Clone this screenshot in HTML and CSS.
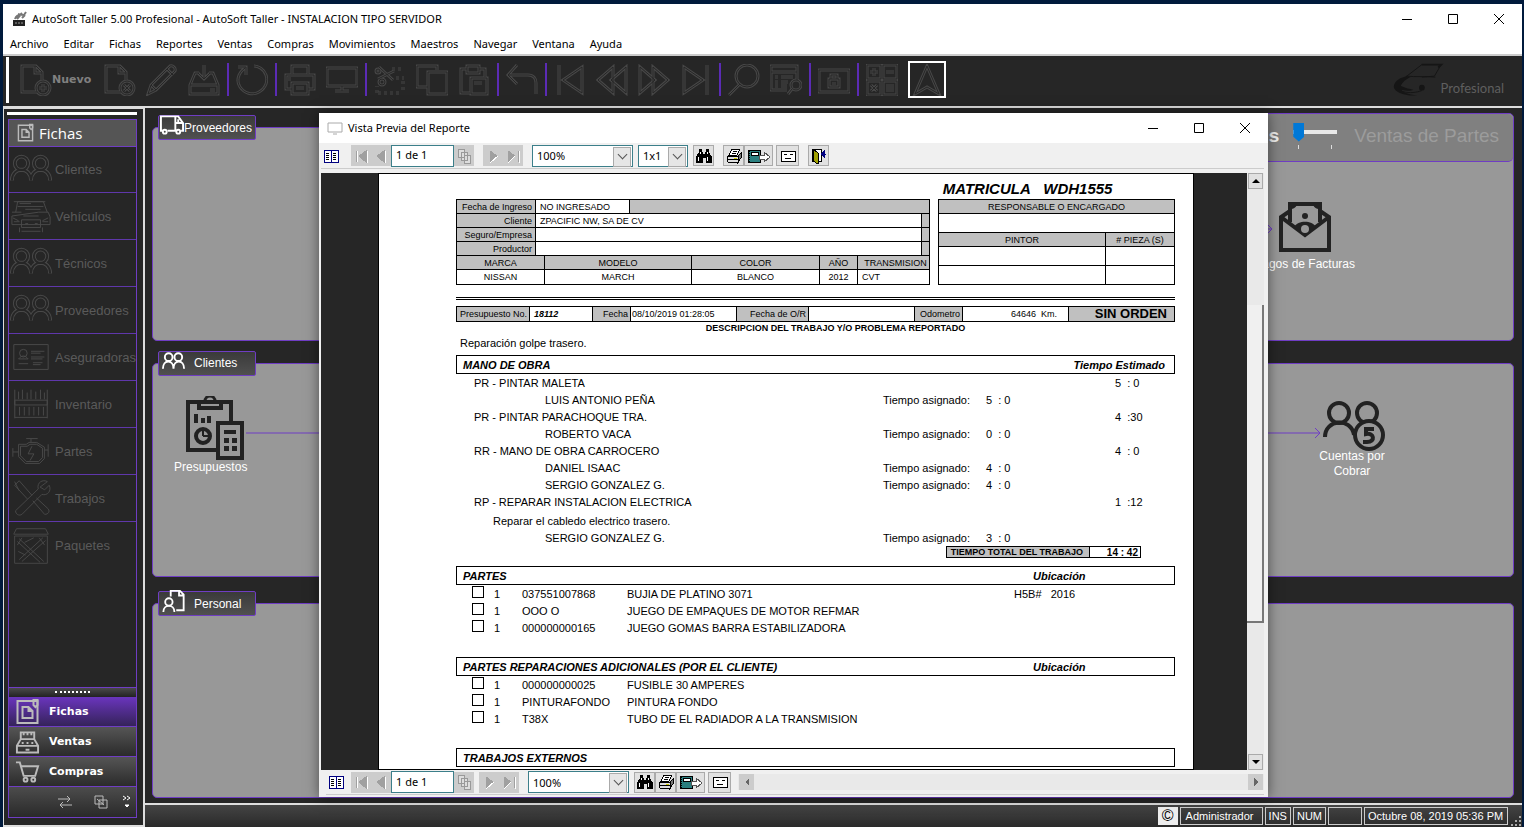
FILE: index.html
```
<!DOCTYPE html>
<html lang="es">
<head>
    <meta charset="UTF-8">
    <meta name="viewport" content="width=device-width, initial-scale=1.0">
    <title>AutoSoft Taller</title>
    <link rel="stylesheet" href="styles.css">
</head>
<body>
    <!-- Icon shapes -->
    <svg class="sprite" aria-hidden="true">
        <symbol id="i-doc" viewBox="0 0 32 32"><path d="M17 28H2V2h14l6 6v8M15 2v7h7"/><circle cx="23" cy="24" r="7"/></symbol>
        <symbol id="i-plus" viewBox="0 0 32 32"><path d="M23 20v8M19 24h8"/></symbol>
        <symbol id="i-x" viewBox="0 0 32 32"><path d="M20 21l6 6M26 21l-6 6"/></symbol>
        <symbol id="i-pencil" viewBox="0 0 32 32"><path d="M2 30l3-9L24 2c3-1 6 2 5 5L10 26zM5 21l5 5M21 5l6 6"/></symbol>
        <symbol id="i-save" viewBox="0 0 32 32"><path d="M11 9H7L2 21v9h28v-9L25 9h-4M2 21h28M16 1v14M10 9l6 6 6-6M22 26h5"/></symbol>
        <symbol id="i-refresh" viewBox="0 0 32 32"><path d="M2 3h8v8M9 4C2 9 0 17 4 23s12 9 19 5 9-11 7-17S22 2 18 2"/></symbol>
        <symbol id="i-print" viewBox="0 0 32 32"><path d="M8 10V2h16v8M8 25H2V11h28v14h-6M8 19h16v11H8zM12 24h8M4 15h3"/></symbol>
        <symbol id="i-monitor" viewBox="0 0 32 32"><path d="M1 4h30v18H1zM16 22v5M9 27h14"/></symbol>
        <symbol id="i-cut" viewBox="0 0 32 32"><path d="M5 3l14 13M4 15l16-8"/><circle cx="4" cy="7" r="2"/><circle cx="8" cy="18" r="3"/><path d="M18 5h12M22 14h8M29 17v12M25 29H3M3 29v-7" stroke-dasharray="3 3"/></symbol>
        <symbol id="i-copy" viewBox="0 0 32 32"><path d="M12 23H1V2h20v4M12 8h19v22H12z"/></symbol>
        <symbol id="i-paste" viewBox="0 0 32 32"><path d="M12 29H3V5h6M21 5h6v8M9 2h12v7H9zM13 14h16v16H13zM16 19h8"/></symbol>
        <symbol id="i-undo" viewBox="0 0 32 32"><path d="M11 1L2 11l9 9M2 11h20c6 0 8 4 8 8v11"/></symbol>
        <symbol id="i-first" viewBox="0 0 32 32"><path d="M5 1v30M28 3v26L9 16z"/></symbol>
        <symbol id="i-rew" viewBox="0 0 32 32"><path d="M17 3v26L2 16zM30 3v26L15 16z"/></symbol>
        <symbol id="i-fwd" viewBox="0 0 32 32"><path d="M15 3v26l15-13zM2 3v26l15-13z"/></symbol>
        <symbol id="i-last" viewBox="0 0 32 32"><path d="M27 1v30M4 3v26l19-13z"/></symbol>
        <symbol id="i-search" viewBox="0 0 32 32"><circle cx="19" cy="12" r="11"/><path d="M12 20L1 31"/></symbol>
        <symbol id="i-list" viewBox="0 0 32 32"><path d="M17 26H1V2h26v14M1 8h26M5 13h3M11 13h12M5 18h3M11 18h7M5 22h3M11 22h6"/><circle cx="26" cy="21" r="5"/><path d="M22 25l-4 5"/></symbol>
        <symbol id="i-lock" viewBox="0 0 32 32"><path d="M1 6h30v22H1zM11 15h10v8H11zM13 15v-4h6v4M16 18v3"/></symbol>
        <symbol id="i-calc" viewBox="0 0 32 32"><path d="M1 1h14v14H1zM17 1h14v14H17zM1 17h14v14H1zM17 17h14v14H17zM4 8h8M8 4v8M20 8h8M5 21l6 6M11 21l-6 6M20 22h8M20 26h8"/></symbol>
        <symbol id="i-nav" viewBox="0 0 32 32"><path d="M16 2l12 28-12-7-12 7z"/></symbol>
        <symbol id="i-people" viewBox="0 0 44 32"><circle cx="12" cy="9" r="7"/><circle cx="32" cy="9" r="7"/><path d="M2 27c0-15 20-15 20 0M22 27c0-15 20-15 20 0"/></symbol>
        <symbol id="i-car" viewBox="0 0 44 36"><path d="M6 14l2-11h27l4 11M4 3h33M8 8h27M2 14h10M30 14h10l2 5v8H2v-9zM12 22h20v8H12zM10 30v5M34 30v5M16 26h3M26 26h3M12 34h20M14 18h16M3 20l6 3M40 20l-6 3M10 5h12M16 11h16M4 24h6M34 24h6"/></symbol>
        <symbol id="i-card" viewBox="0 0 44 32"><path d="M4 3h36v26H4zM22 10h14M22 12h10M22 16h14M22 18h12M24 22h10M24 24h8M9 23h10M9 18c3-4 7-4 10 0z"/><circle cx="14" cy="12" r="4"/></symbol>
        <symbol id="i-shelf" viewBox="0 0 44 36"><path d="M5 3v30M39 3v30M5 14h34v5H5zM5 32h34M9 5v8M13 3v10M18 6v7M22 3v10M27 5v8M32 3v10M36 6v7M10 21v9M15 21v9M20 21v9M25 21v9M30 21v9M35 21v9"/></symbol>
        <symbol id="i-engine" viewBox="0 0 44 36"><path d="M9 11h8l3-2h8l8 5v12l-5 5H16l-7-7zM11 13h7l3-2h7l6 4v10l-4 4H17l-6-6zM17 5h12M22 5v4M3 15v9M3 19h6M40 11v13M36 17h4M23 13l-4 8h6l-4 7"/></symbol>
        <symbol id="i-tools" viewBox="0 0 44 44"><path d="M4 8l5-5 14 16M40 4c-5-3-12 1-10 8L5 36c0 4 4 6 7 4l22-22c6 2 11-4 8-10l-5 5-5-3zM24 25l13 15c4 0 6-3 4-6L28 22M4 8l14 15M4 4l5 10"/></symbol>
        <symbol id="i-box" viewBox="0 0 44 44"><path d="M6 3h32l3 6H3zM4 11h36v30H4zM9 37l26-24M12 39l26-23M9 14l27 25M7 17l25 23M12 13l-5 8M31 13l6 8M15 18l10-5M8 28l8 4"/></symbol>
        <symbol id="i-file" viewBox="0 0 24 26"><path d="M2 2h20v22H2z"/><path d="M7 8h6l4 4v7H7zM13 8v4h4"/><path d="M18 1v5l2 2 2-2V1z"/></symbol>
        <symbol id="i-register" viewBox="0 0 26 24"><path d="M6 10V2h14v8M9 1v4M13 1v4M17 1v4M6 9L2 16v7h22v-7l-4-7zM2 16h22M7 13h2M12 13h2M17 13h2M11 20h4"/></symbol>
        <symbol id="i-cart" viewBox="0 0 26 24"><path d="M1 2h4l4 14h12l3-10H6"/><circle cx="11" cy="20" r="2"/><circle cx="19" cy="20" r="2"/></symbol>

        <!-- Report toolbar -->
        <symbol id="r-toc" viewBox="0 0 16 16"><path d="M1 2h14v12H1z" fill="#fff" stroke="#000080"/><path d="M8 2v12" stroke="#000080"/><path d="M3 5h3M3 7h3M3 9h3M3 11h3M10 5h3M10 7h3M10 9h3M10 11h3" stroke="#000"/></symbol>
        <symbol id="r-first" viewBox="0 0 16 16"><path d="M3 3v11M13 3v11L6 8z" fill="#a0a0a0" stroke="#a0a0a0"/><path d="M4 3v11M14 3v12" stroke="#fff"/></symbol>
        <symbol id="r-prev" viewBox="0 0 16 16"><path d="M11 3v11L4 8z" fill="#a0a0a0" stroke="#a0a0a0"/><path d="M12 3v12" stroke="#fff"/></symbol>
        <symbol id="r-copy" viewBox="0 0 16 16"><path d="M2 1h6v8H2zM5 4h6v8H5zM8 7h6v8H8z" fill="#ddd" stroke="#999"/></symbol>
        <symbol id="r-next" viewBox="0 0 16 16"><path d="M5 3v11l7-6z" fill="#a0a0a0" stroke="#a0a0a0"/><path d="M5 15l8-7" stroke="#fff"/></symbol>
        <symbol id="r-last" viewBox="0 0 16 16"><path d="M3 3v11l7-6zM13 3v11" fill="#a0a0a0" stroke="#a0a0a0"/><path d="M3 15l7-7M14 3v12" stroke="#fff"/></symbol>
        <symbol id="r-find" viewBox="0 0 16 16"><path d="M3 1h3v3h1v2h2V4h1V1h3v3l3 5v6h-6v-5H7v5H0V9l3-5z" fill="#000"/><path d="M2 9v4M11 9v4M4 4v2M11 4v2" stroke="#fff"/></symbol>
        <symbol id="r-print" viewBox="0 0 16 16"><path d="M6 1h8l-3 6H3z" fill="#fff" stroke="#000"/><path d="M7 3h4M6 5h4" stroke="#000"/><path d="M1 8h11v6H2l-1-2z" fill="#ddd" stroke="#000"/><path d="M12 8l3-3v5l-3 4z" fill="#777" stroke="#000"/><path d="M2 11h10" stroke="#000"/><path d="M8 10h3" stroke="#cc0"/></symbol>
        <symbol id="r-export" viewBox="0 0 24 16"><path d="M1 2h12v12H1z" fill="#2a8080" stroke="#000"/><path d="M4 4h7v3H4z" fill="#fff" stroke="#000"/><path d="M2 3v11" stroke="#000" stroke-dasharray="1 1"/><path d="M12 7h5V4l6 5-6 5v-3h-5z" fill="#fff" stroke="#555"/></symbol>
        <symbol id="r-mail" viewBox="0 0 16 16"><path d="M1 3h14v10H1z" fill="#fff" stroke="#000"/><path d="M4 6h3M10 6h3M5 10h6" stroke="#000"/></symbol>
        <symbol id="r-exit" viewBox="0 0 16 16"><path d="M1 1h9v12H1z" fill="#fff" stroke="#000"/><path d="M2 1l5 4v11l-5-3z" fill="#a0a000" stroke="#000"/><path d="M10 6h5M10 6l3-3v6z" fill="#000080" stroke="#000080"/></symbol>
    </svg>

    <div class="app">
        <header class="titlebar">
            <svg class="app-logo" viewBox="0 0 16 18"><path d="M2 10h12v6H2z" fill="#222"/><path d="M4 9c1-3 4-5 9-4l2-3M6 9l5-6M11 8l3-3M7 4l3 1" stroke="#777" stroke-width="2" fill="none"/><path d="M4 13h8" stroke="#999" stroke-dasharray="2 1"/></svg>
            <h1>AutoSoft Taller 5.00 Profesional - AutoSoft Taller - INSTALACION TIPO SERVIDOR</h1>
            <div class="win-buttons">
                <button aria-label="Minimizar"><svg viewBox="0 0 12 12"><path d="M1 6.5h10"/></svg></button>
                <button aria-label="Maximizar"><svg viewBox="0 0 12 12"><path d="M1.5 1.5h9v9h-9z"/></svg></button>
                <button aria-label="Cerrar"><svg viewBox="0 0 12 12"><path d="M1 1l10 10M11 1L1 11"/></svg></button>
            </div>
        </header>

        <nav class="menu">
            <a href="#">Archivo</a>
            <a href="#">Editar</a>
            <a href="#">Fichas</a>
            <a href="#">Reportes</a>
            <a href="#">Ventas</a>
            <a href="#">Compras</a>
            <a href="#">Movimientos</a>
            <a href="#">Maestros</a>
            <a href="#">Navegar</a>
            <a href="#">Ventana</a>
            <a href="#">Ayuda</a>
        </nav>

        <!-- Main toolbar -->
        <div class="toolbar">
            <span class="grip"></span>
            <button class="tool new"><svg><use href="#i-doc"/><use href="#i-plus"/><use class="in" href="#i-doc"/><use class="in" href="#i-plus"/></svg>Nuevo</button>
            <button class="tool" aria-label="Eliminar"><svg><use href="#i-doc"/><use href="#i-x"/><use class="in" href="#i-doc"/><use class="in" href="#i-x"/></svg></button>
            <button class="tool" aria-label="Editar"><svg><use href="#i-pencil"/><use class="in" href="#i-pencil"/></svg></button>
            <button class="tool" aria-label="Guardar"><svg><use href="#i-save"/><use class="in" href="#i-save"/></svg></button>
            <i class="sep"></i>
            <button class="tool" aria-label="Actualizar"><svg><use href="#i-refresh"/><use class="in" href="#i-refresh"/></svg></button>
            <i class="sep"></i>
            <button class="tool" aria-label="Imprimir"><svg><use href="#i-print"/><use class="in" href="#i-print"/></svg></button>
            <button class="tool" aria-label="Pantalla"><svg><use href="#i-monitor"/><use class="in" href="#i-monitor"/></svg></button>
            <i class="sep"></i>
            <button class="tool" aria-label="Cortar"><svg><use href="#i-cut"/><use class="in" href="#i-cut"/></svg></button>
            <button class="tool" aria-label="Copiar"><svg><use href="#i-copy"/><use class="in" href="#i-copy"/></svg></button>
            <button class="tool" aria-label="Pegar"><svg><use href="#i-paste"/><use class="in" href="#i-paste"/></svg></button>
            <i class="sep"></i>
            <button class="tool" aria-label="Deshacer"><svg><use href="#i-undo"/><use class="in" href="#i-undo"/></svg></button>
            <i class="sep"></i>
            <button class="tool" aria-label="Primero"><svg><use href="#i-first"/><use class="in" href="#i-first"/></svg></button>
            <button class="tool" aria-label="Anterior"><svg><use href="#i-rew"/><use class="in" href="#i-rew"/></svg></button>
            <button class="tool" aria-label="Siguiente"><svg><use href="#i-fwd"/><use class="in" href="#i-fwd"/></svg></button>
            <button class="tool" aria-label="Ultimo"><svg><use href="#i-last"/><use class="in" href="#i-last"/></svg></button>
            <i class="sep"></i>
            <button class="tool" aria-label="Buscar"><svg><use href="#i-search"/><use class="in" href="#i-search"/></svg></button>
            <button class="tool" aria-label="Consultar"><svg><use href="#i-list"/><use class="in" href="#i-list"/></svg></button>
            <i class="sep"></i>
            <button class="tool" aria-label="Bloquear"><svg><use href="#i-lock"/><use class="in" href="#i-lock"/></svg></button>
            <i class="sep"></i>
            <button class="tool" aria-label="Calculadora"><svg><use href="#i-calc"/><use class="in" href="#i-calc"/></svg></button>
            <button class="tool active" aria-label="Navegador"><svg><use href="#i-nav"/><use class="in" href="#i-nav"/></svg></button>
            <div class="brand">
                <svg viewBox="0 0 54 36"><path d="M13 15L30 2h20l-7 12-13 1" fill="none" stroke="#151515" stroke-width="1"/><path d="M30 2h20l-3 3" fill="none" stroke="#151515" stroke-width="2"/><path d="M14 14C4 16 0 22 1 26s10 9 24 8c-9-1-16-4-16-6 7 2 10 1 12 0-6-1-9-2-13-4 2-4 6-7 10-9" fill="#151515"/><path d="M14 14c10 1 20 0 30 1M10 30c8 2 14 1 20-1" fill="none" stroke="#151515"/><circle cx="30" cy="26" r="3" fill="#151515"/></svg>
                <span>Profesional</span>
            </div>
        </div>

        <div class="body">
            <aside class="sidebar">
                <div class="bar-grip"></div>
                <div class="side-box">
                    <h2 class="side-head"><svg><use href="#i-file"/></svg>Fichas</h2>
                    <nav class="side-list">
                        <a href="#"><svg><use href="#i-people"/><use class="in" href="#i-people"/></svg>Clientes</a>
                        <a href="#"><svg><use href="#i-car"/></svg>Vehículos</a>
                        <a href="#"><svg><use href="#i-people"/><use class="in" href="#i-people"/></svg>Técnicos</a>
                        <a href="#"><svg><use href="#i-people"/><use class="in" href="#i-people"/></svg>Proveedores</a>
                        <a href="#"><svg><use href="#i-card"/></svg>Aseguradoras</a>
                        <a href="#"><svg><use href="#i-shelf"/></svg>Inventario</a>
                        <a href="#"><svg><use href="#i-engine"/></svg>Partes</a>
                        <a href="#"><svg><use href="#i-tools"/></svg>Trabajos</a>
                        <a href="#"><svg><use href="#i-box"/></svg>Paquetes</a>
                    </nav>
                    <div class="splitter"><i></i></div>
                    <button class="group selected"><svg><use href="#i-file"/></svg>Fichas</button>
                    <button class="group"><svg><use href="#i-register"/></svg>Ventas</button>
                    <button class="group"><svg><use href="#i-cart"/></svg>Compras</button>
                    <div class="side-foot">
                        <button aria-label="Cambiar"><svg viewBox="0 0 14 14"><path d="M0 4h12M9 1l3 3-3 3M14 10H2M5 7l-3 3 3 3"/></svg></button>
                        <button aria-label="Ventanas"><svg viewBox="0 0 14 14"><path d="M1 1h8v8H1zM5 5h8v8H5zM3 4l7 6"/></svg></button>
                        <button class="more" aria-label="Mas"><svg viewBox="0 0 10 14"><path d="M1 1l3 2-3 2M5 1l3 2-3 2"/><path d="M3 10h4l-2 2z" fill="#fff"/></svg></button>
                    </div>
                </div>
            </aside>

            <div class="work">
                <main class="desk">
                    <section class="row first-row">
                        <div class="panel short">
                            <h3 class="tag wide-icon"><svg viewBox="0 0 26 20"><path d="M4 16H2V1h15v15H9M17 1h3l5 7v8h-2M17 8h8M20 8V4"/><circle cx="6" cy="17" r="2"/><circle cx="20" cy="17" r="2"/></svg>Proveedores</h3>
                        </div>
                        <div class="panel">
                            <div class="panel-head">
                                <label for="modo">s</label>
                                <div class="slider">
                                    <input id="modo" type="range" min="0" max="1" value="0">
                                    <div class="ticks"><i></i><i></i></div>
                                </div>
                                <span>Ventas de Partes</span>
                            </div>
                            <div class="node node-pagos">
                                <svg viewBox="0 0 52 50"><path d="M2 15v33h48V15L41 9M11 9L2 15l24 18 24-18M11 20V2h30v18" fill="none" stroke="#222" stroke-width="4"/><path d="M11 1h7c0 4-3 6-7 6zM41 1h-7c0 4 3 6 7 6z" fill="#222"/><circle cx="26" cy="14" r="3" fill="#222"/><path d="M15 25c4-7 18-7 22 0L26 35z" fill="#222"/><circle cx="26" cy="27" r="4" fill="#989898"/></svg>
                                Pagos de Facturas
                            </div>
                            <svg class="arrow arrow-pagos" viewBox="0 0 76 10"><path d="M0 5h75M70 0l5 5-5 5"/></svg>
                        </div>
                    </section>
                    <section class="panel">
                        <h3 class="tag"><svg viewBox="0 0 26 18"><circle cx="8" cy="5" r="4"/><circle cx="18" cy="5" r="4"/><path d="M2 17c0-10 11-10 11 0M13 17c0-10 11-10 11 0"/></svg>Clientes</h3>
                        <div class="node node-presup">
                            <svg viewBox="0 0 58 64"><path d="M2 6h43v48H2z" fill="none" stroke="#222" stroke-width="4"/><path d="M13 4v8h22V4" fill="none" stroke="#222" stroke-width="4"/><path d="M19 5a5 5 0 0110 0" fill="none" stroke="#222" stroke-width="3"/><path d="M8 18h4v9H8zM15 22h4v5h-4zM21 20h4v7h-4z" fill="#222"/><circle cx="17" cy="40" r="7" fill="none" stroke="#222" stroke-width="4"/><path d="M17 40v-5M17 40h5" stroke="#222" stroke-width="2"/><path d="M32 27h24v35H32z" fill="#989898" stroke="#222" stroke-width="4"/><path d="M38 34h12v4H38zM38 42h5v5h-5zM46 42h5v5h-5zM38 50h5v5h-5zM46 50h5v5h-5z" fill="#222"/></svg>
                            Presupuestos
                        </div>
                        <svg class="arrow arrow-cobrar" viewBox="0 0 1076 10" preserveAspectRatio="xMaxYMid slice"><path d="M0 5h1075M1070 0l5 5-5 5"/></svg>
                        <div class="node node-cobrar">
                            <svg viewBox="0 0 64 52"><circle cx="17" cy="13" r="10" fill="none" stroke="#222" stroke-width="4"/><circle cx="45" cy="13" r="10" fill="none" stroke="#222" stroke-width="4"/><path d="M3 37c0-18 26-20 29-2" fill="none" stroke="#222" stroke-width="4"/><circle cx="47" cy="35" r="14" fill="#989898" stroke="#222" stroke-width="4"/><path d="M52 29h-8v5c8-2 10 8 1 8h-4" fill="none" stroke="#222" stroke-width="4"/></svg>
                            Cuentas por Cobrar
                        </div>
                    </section>
                    <section class="panel last-row">
                        <h3 class="tag"><svg viewBox="0 0 26 26"><path d="M10 8V2h10l4 4v17h-8M19 2v5h5"/><circle cx="8" cy="14" r="4"/><path d="M2 25c0-9 12-9 12 0"/></svg>Personal</h3>
                    </section>

                    <!-- Report preview window -->
                    <div class="preview">
                        <div class="titlebar preview-title">
                            <svg class="preview-logo" viewBox="0 0 16 14"><path d="M1 2h14v9H1zM6 13h4" fill="none" stroke="#aaa"/></svg>
                            <h2>Vista Previa del Reporte</h2>
                            <div class="win-buttons">
                                <button aria-label="Minimizar"><svg viewBox="0 0 12 12"><path d="M1 6.5h10"/></svg></button>
                                <button aria-label="Maximizar"><svg viewBox="0 0 12 12"><path d="M1.5 1.5h9v9h-9z"/></svg></button>
                                <button aria-label="Cerrar"><svg viewBox="0 0 12 12"><path d="M1 1l10 10M11 1L1 11"/></svg></button>
                            </div>
                        </div>
                        <div class="rbar">
                            <button class="plain" aria-label="Indice"><svg><use href="#r-toc"/></svg></button>
                            <button class="off" aria-label="Primera"><svg><use href="#r-first"/></svg></button>
                            <button class="off" aria-label="Anterior"><svg><use href="#r-prev"/></svg></button>
                            <input type="text" value="1 de 1" aria-label="Pagina">
                            <button class="off" aria-label="Copias"><svg><use href="#r-copy"/></svg></button>
                            <button class="off gap" aria-label="Siguiente"><svg><use href="#r-next"/></svg></button>
                            <button class="off" aria-label="Ultima"><svg><use href="#r-last"/></svg></button>
                            <span class="drop zoom gap"><select aria-label="Zoom"><option>100%</option></select></span>
                            <span class="drop pages"><select aria-label="Paginas"><option>1x1</option></select></span>
                            <button aria-label="Buscar"><svg><use href="#r-find"/></svg></button>
                            <button class="gap" aria-label="Imprimir"><svg><use href="#r-print"/></svg></button>
                            <button class="wide" aria-label="Exportar"><svg><use href="#r-export"/></svg></button>
                            <button class="mail" aria-label="Correo"><svg><use href="#r-mail"/></svg></button>
                            <button class="gap" aria-label="Salir"><svg><use href="#r-exit"/></svg></button>
                        </div>

                        <div class="viewer">
                            <div class="canvas">
                                <article class="page">
                                    <p class="plate">MATRICULA&nbsp;&nbsp; WDH1555</p>
                                    <div class="heads">
                                        <div class="head-left">
                                            <table class="grid client">
                                                <colgroup><col class="c-label"><col class="c-date"><col><col class="c-end"></colgroup>
                                                <tr><th>Fecha de Ingreso</th><td>NO INGRESADO</td><td class="g" colspan="2"></td></tr>
                                                <tr><th>Cliente</th><td colspan="2">ZPACIFIC NW, SA DE CV</td><td class="g"></td></tr>
                                                <tr><th>Seguro/Empresa</th><td colspan="2"></td><td class="g"></td></tr>
                                                <tr><th>Productor</th><td colspan="2"></td><td class="g"></td></tr>
                                            </table>
                                            <table class="grid vehicle">
                                                <colgroup><col class="c-marca"><col class="c-modelo"><col><col class="c-anio"><col class="c-trans"></colgroup>
                                                <tr><th>MARCA</th><th>MODELO</th><th>COLOR</th><th>AÑO</th><th>TRANSMISION</th></tr>
                                                <tr><td>NISSAN</td><td>MARCH</td><td>BLANCO</td><td>2012</td><td class="left">CVT</td></tr>
                                            </table>
                                        </div>
                                        <table class="grid staff">
                                            <colgroup><col><col class="c-pieza"></colgroup>
                                            <tr><th colspan="2">RESPONSABLE O ENCARGADO</th></tr>
                                            <tr class="tall"><td colspan="2"></td></tr>
                                            <tr><th>PINTOR</th><th># PIEZA (S)</th></tr>
                                            <tr class="tall"><td></td><td></td></tr>
                                            <tr class="tall"><td></td><td></td></tr>
                                        </table>
                                    </div>
                                    <div class="rule"></div>
                                    <table class="grid order">
                                        <colgroup><col class="o1"><col class="o2"><col class="o3"><col class="o4"><col class="o5"><col class="o4"><col class="o6"><col class="o4"><col></colgroup>
                                        <tr>
                                            <th>Presupuesto No.</th><td><b><i>18112</i></b></td>
                                            <th>Fecha</th><td class="tight">08/10/2019 01:28:05</td>
                                            <th>Fecha de O/R</th><td></td>
                                            <th>Odometro</th><td class="km">64646&nbsp; Km.</td>
                                            <th class="status">SIN ORDEN</th>
                                        </tr>
                                    </table>
                                    <p class="desc-title">DESCRIPCION DEL TRABAJO Y/O PROBLEMA REPORTADO</p>
                                    <p class="desc">Reparación golpe trasero.</p>

                                    <h4 class="section"><span>MANO DE OBRA</span><span class="est">Tiempo Estimado</span></h4>
                                    <table class="labor">
                                        <colgroup><col><col class="l-asig"><col class="l-val"><col class="l-est"></colgroup>
                                        <tr><td>PR - PINTAR MALETA</td><td></td><td></td><td>5 &nbsp;: 0</td></tr>
                                        <tr><td class="who">LUIS ANTONIO PEÑA</td><td>Tiempo asignado:</td><td>5 &nbsp;: 0</td><td></td></tr>
                                        <tr><td>PR - PINTAR PARACHOQUE TRA.</td><td></td><td></td><td>4 &nbsp;:30</td></tr>
                                        <tr><td class="who">ROBERTO VACA</td><td>Tiempo asignado:</td><td>0 &nbsp;: 0</td><td></td></tr>
                                        <tr><td>RR - MANO DE OBRA CARROCERO</td><td></td><td></td><td>4 &nbsp;: 0</td></tr>
                                        <tr><td class="who">DANIEL ISAAC</td><td>Tiempo asignado:</td><td>4 &nbsp;: 0</td><td></td></tr>
                                        <tr><td class="who">SERGIO GONZALEZ G.</td><td>Tiempo asignado:</td><td>4 &nbsp;: 0</td><td></td></tr>
                                        <tr><td>RP - REPARAR INSTALACION ELECTRICA</td><td></td><td></td><td>1 &nbsp;:12</td></tr>
                                        <tr class="note"><td>Reparar el cabledo electrico trasero.</td><td></td><td></td><td></td></tr>
                                        <tr><td class="who">SERGIO GONZALEZ G.</td><td>Tiempo asignado:</td><td>3 &nbsp;: 0</td><td></td></tr>
                                    </table>
                                    <div class="total"><b>TIEMPO TOTAL DEL TRABAJO</b><strong>14 : 42</strong></div>

                                    <h4 class="section"><span>PARTES</span><span class="ubic">Ubicación</span></h4>
                                    <table class="parts">
                                        <colgroup><col class="p-chk"><col class="p-qty"><col class="p-code"><col><col class="p-ubi"></colgroup>
                                        <tr><td><input type="checkbox" aria-label="037551007868"></td><td>1</td><td>037551007868</td><td>BUJIA DE PLATINO 3071</td><td>H5B# &nbsp; 2016</td></tr>
                                        <tr><td><input type="checkbox" aria-label="OOO O"></td><td>1</td><td>OOO O</td><td>JUEGO DE EMPAQUES DE MOTOR REFMAR</td><td></td></tr>
                                        <tr><td><input type="checkbox" aria-label="000000000165"></td><td>1</td><td>000000000165</td><td>JUEGO GOMAS BARRA ESTABILIZADORA</td><td></td></tr>
                                    </table>

                                    <h4 class="section"><span>PARTES REPARACIONES ADICIONALES (POR EL CLIENTE)</span><span class="ubic">Ubicación</span></h4>
                                    <table class="parts">
                                        <colgroup><col class="p-chk"><col class="p-qty"><col class="p-code"><col><col class="p-ubi"></colgroup>
                                        <tr><td><input type="checkbox" aria-label="000000000025"></td><td>1</td><td>000000000025</td><td>FUSIBLE 30 AMPERES</td><td></td></tr>
                                        <tr><td><input type="checkbox" aria-label="PINTURAFONDO"></td><td>1</td><td>PINTURAFONDO</td><td>PINTURA FONDO</td><td></td></tr>
                                        <tr><td><input type="checkbox" aria-label="T38X"></td><td>1</td><td>T38X</td><td>TUBO DE EL RADIADOR A LA TRANSMISION</td><td></td></tr>
                                    </table>

                                    <h4 class="section"><span>TRABAJOS EXTERNOS</span></h4>
                                </article>
                            </div>
                            <div class="vscroll">
                                <button aria-label="Subir"><svg viewBox="0 0 8 8"><path d="M0 6h8L4 2z"/></svg></button>
                                <div class="before"></div>
                                <div class="thumb"></div>
                                <div class="after"></div>
                                <button aria-label="Bajar"><svg viewBox="0 0 8 8"><path d="M0 2h8L4 6z"/></svg></button>
                            </div>
                        </div>

                        <div class="rbar bottom">
                            <button class="plain" aria-label="Indice"><svg><use href="#r-toc"/></svg></button>
                            <button class="off" aria-label="Primera"><svg><use href="#r-first"/></svg></button>
                            <button class="off" aria-label="Anterior"><svg><use href="#r-prev"/></svg></button>
                            <input type="text" value="1 de 1" aria-label="Pagina">
                            <button class="off" aria-label="Copias"><svg><use href="#r-copy"/></svg></button>
                            <button class="off small-gap" aria-label="Siguiente"><svg><use href="#r-next"/></svg></button>
                            <button class="off" aria-label="Ultima"><svg><use href="#r-last"/></svg></button>
                            <span class="drop zoom gap"><select aria-label="Zoom"><option>100%</option></select></span>
                            <button class="small-gap" aria-label="Buscar"><svg><use href="#r-find"/></svg></button>
                            <button aria-label="Imprimir"><svg><use href="#r-print"/></svg></button>
                            <button class="wide" aria-label="Exportar"><svg><use href="#r-export"/></svg></button>
                            <button class="mail" aria-label="Correo"><svg><use href="#r-mail"/></svg></button>
                            <div class="hscroll">
                                <button aria-label="Izquierda"><svg viewBox="0 0 8 8"><path d="M6 0v8L2 4z"/></svg></button>
                                <button aria-label="Derecha"><svg viewBox="0 0 8 8"><path d="M2 0v8l4-4z"/></svg></button>
                            </div>
                        </div>
                    </div>
                </main>

                <footer class="statusbar">
                    <span class="copy">©</span>
                    <span class="cell user">Administrador</span>
                    <span class="cell">INS</span>
                    <span class="cell">NUM</span>
                    <span class="cell empty"></span>
                    <span class="cell date">Octubre 08, 2019 05:36 PM</span>
                    <svg class="resize" viewBox="0 0 12 12"><path d="M9 1h2v2H9zM5 5h2v2H5zM9 5h2v2H9zM1 9h2v2H1zM5 9h2v2H5zM9 9h2v2H9z" fill="#aaa"/></svg>
                </footer>
            </div>
        </div>
    </div>
</body>
</html>
```

FILE: styles.css
```
* {
    margin: 0;
    padding: 0;
    box-sizing: border-box;
}

body {
    height: 100vh;
    overflow: hidden;
    padding: 4px 2px 0 3px;
    background-color: #001a3c;
    font-family: "Liberation Sans", Arial, sans-serif;
    font-size: 12px;
}

button {
    font: inherit;
    border: none;
    background: none;
    cursor: pointer;
}

a {
    text-decoration: none;
    color: inherit;
}

svg {
    display: block;
    flex: none;
}

.sprite {
    position: absolute;
    width: 0;
    height: 0;
}

.app {
    height: 100%;
    display: flex;
    flex-direction: column;
    background-color: #262626;
}

/* Title bar and menu */
.titlebar {
    display: flex;
    align-items: center;
    height: 30px;
    padding-left: 8px;
    background-color: #fff;
}

.titlebar h1,
.titlebar h2 {
    flex: 1;
    padding-bottom: 2px;
    font-family: "Noto Sans", "Open Sans", sans-serif;
    font-size: 11px;
    font-weight: normal;
}

.app-logo {
    width: 16px;
    height: 18px;
    margin-right: 5px;
}

.win-buttons {
    display: flex;
}

.win-buttons button {
    width: 46px;
    height: 28px;
    display: flex;
    align-items: center;
    justify-content: center;
}

.win-buttons svg {
    width: 12px;
    height: 12px;
    fill: none;
    stroke: #000;
}

.menu {
    display: flex;
    gap: 15px;
    height: 20px;
    padding-left: 7px;
    background-color: #fff;
    font-family: "Noto Sans", "Open Sans", sans-serif;
    font-size: 11px;
    line-height: 20px;
}

/* Main toolbar */
.toolbar {
    display: flex;
    align-items: center;
    height: 54px;
    padding: 0 18px 3px 3px;
    border-top: 2px solid #ccc;
    border-bottom: 2px solid #ddd;
}

.grip {
    width: 3px;
    height: 46px;
    margin-right: 11px;
    background-color: #fff;
}

.tool {
    display: flex;
    align-items: center;
    justify-content: center;
    width: 42px;
    height: 37px;
    color: #808080;
    font-family: "DejaVu Sans", Verdana, sans-serif;
    font-size: 11px;
    font-weight: bold;
}

.tool.new {
    justify-content: flex-start;
    width: 79px;
}

.tool svg {
    width: 32px;
    height: 32px;
    fill: none;
    stroke: #474747;
    stroke-width: 3;
}

.tool svg .in {
    stroke: #262626;
    stroke-width: 1;
}

.tool.active {
    width: 38px;
    margin-left: 5px;
    border: 2px solid #fff;
}

.sep {
    width: 2px;
    height: 33px;
    margin: 0 2px;
    background-color: #5b2bb5;
}

.brand {
    display: flex;
    align-items: center;
    margin-left: auto;
    color: #5f5f5f;
    font-family: Lato, sans-serif;
    font-size: 13px;
}

.brand svg {
    width: 52px;
    height: 36px;
    margin-right: -4px;
}

.brand span {
    padding-top: 17px;
}

/* Sidebar */
.body {
    flex: 1;
    display: flex;
    min-height: 0;
}

.sidebar {
    display: flex;
    flex-direction: column;
    width: 142px;
    padding: 3px 6px 7px 3px;
    border: 1px solid #ddd;
    border-right: 2px solid #ddd;
    border-bottom: 2px solid #ddd;
}

.bar-grip {
    height: 3px;
    margin-bottom: 4px;
    background-color: #fff;
}

.side-box {
    flex: 1;
    display: flex;
    flex-direction: column;
    margin-left: 1px;
    border: 1px solid #6f3dc4;
}

.side-head {
    display: flex;
    align-items: center;
    gap: 5px;
    height: 27px;
    padding: 0 0 1px 8px;
    border-bottom: 1px solid #6f3dc4;
    background-color: #555;
    color: #fff;
    font-family: "Open Sans", sans-serif;
    font-size: 15px;
    font-weight: normal;
}

.side-head svg {
    width: 17px;
    height: 20px;
}

.side-head svg,
.group svg,
.side-foot svg {
    fill: none;
    stroke: #bbb;
    stroke-width: 2;
}

.side-list {
    flex: 1;
    border-bottom: 1px solid #6f3dc4;
}

.side-list a {
    display: flex;
    align-items: center;
    gap: 3px;
    height: 47px;
    padding-left: 1px;
    border-bottom: 1px solid #5f37ab;
    color: #5a5a5a;
    font-size: 13px;
}

.side-list a:first-child {
    height: 46px;
}

.side-list a:last-child {
    border-bottom: none;
}

.side-list svg {
    width: 42px;
    height: 40px;
    fill: none;
    stroke: #4a4a4a;
    stroke-width: 1;
}

.side-list use:not(:only-child) {
    stroke-width: 4;
}

.side-list svg .in:not(:only-child) {
    stroke: #262626;
    stroke-width: 2;
}

.splitter {
    height: 9px;
    padding-top: 3px;
    background: linear-gradient(#4a4a4a, #222);
}

.splitter i {
    display: block;
    width: 35px;
    margin: 0 auto;
    border-top: 2px dotted #fff;
}

.group {
    display: flex;
    align-items: center;
    gap: 9px;
    height: 30px;
    padding-left: 6px;
    border-bottom: 1px solid #6f3dc4;
    background: linear-gradient(#555, #2b2b2b);
    color: #fff;
    font-family: "DejaVu Sans", Verdana, sans-serif;
    font-size: 11px;
    font-weight: bold;
}

.group.selected {
    background: linear-gradient(#6a35bd, #35235a);
}

.group svg {
    width: 25px;
    height: 26px;
}

.side-foot {
    display: flex;
    align-items: center;
    justify-content: flex-end;
    gap: 22px;
    height: 30px;
    padding-right: 4px;
    background: linear-gradient(#4c4c4c, #292929);
}

.side-foot svg {
    width: 14px;
    height: 14px;
    stroke-width: 1;
}

.side-foot .more {
    margin-left: -8px;
}

.side-foot .more svg {
    width: 10px;
    stroke: #fff;
}

/* Work area */
.work {
    flex: 1;
    display: flex;
    flex-direction: column;
    min-width: 0;
}

.desk {
    position: relative;
    flex: 1;
    display: grid;
    grid-template-rows: 228fr 215fr 199fr;
    gap: 22px;
    padding: 5px 8px 5px 7px;
}

.row {
    display: flex;
    gap: 20px;
}

.panel {
    position: relative;
    flex: 1;
    border: 1px solid #6f3dc4;
    border-radius: 5px;
    background-color: #989898;
}

.panel.short {
    margin-top: 14px;
}

.last-row {
    margin-top: 4px;
}

.tag {
    position: absolute;
    top: -13px;
    left: 5px;
    display: flex;
    align-items: center;
    gap: 8px;
    width: 98px;
    height: 25px;
    padding-left: 2px;
    border: 1px solid #6f3dc4;
    border-radius: 2px;
    background: linear-gradient(#3a3a3a, #505050);
    color: #fff;
    font-size: 12px;
    font-weight: normal;
}

.tag.wide-icon {
    gap: 0;
    padding-left: 0;
}

.tag svg {
    width: 25px;
    height: 24px;
    margin-bottom: 5px;
    fill: none;
    stroke: #fff;
    stroke-width: 2;
}

.panel-head {
    display: flex;
    align-items: center;
    justify-content: flex-end;
    height: 48px;
    padding: 0 14px 4px 0;
    border-bottom: 1px solid #6f3dc4;
    border-radius: 5px;
    background-color: #808080;
    color: #9c9c9c;
    font-size: 19px;
}

.panel-head label {
    color: #eee;
    font-weight: bold;
}

.slider {
    width: 44px;
    margin: 0 17px 0 14px;
}

.slider input {
    display: block;
    width: 100%;
    height: 19px;
    appearance: none;
    background: linear-gradient(#e8e8e8, #e8e8e8) center / 100% 4px no-repeat;
}

.slider input::-webkit-slider-thumb {
    appearance: none;
    width: 11px;
    height: 19px;
    background-color: #0078d7;
    clip-path: polygon(0 0, 100% 0, 100% 75%, 50% 100%, 0 75%);
}

.ticks {
    display: flex;
    justify-content: space-between;
    height: 4px;
    margin: 3px 5px 0;
}

.ticks i {
    width: 1px;
    background-color: #ddd;
}

/* Workflow nodes */
.node {
    position: absolute;
    display: flex;
    flex-direction: column;
    align-items: center;
    color: #fff;
    font-size: 12px;
    line-height: 15px;
    text-align: center;
    white-space: nowrap;
}

.node-pagos {
    top: 88px;
    right: 158px;
}

.node-pagos svg {
    width: 52px;
    height: 50px;
    margin-bottom: 5px;
}

.node-presup {
    top: 32px;
    left: 21px;
}

.node-presup svg {
    width: 58px;
    height: 64px;
    margin-left: 8px;
}

.node-cobrar {
    top: 36px;
    right: 126px;
    width: 70px;
    white-space: normal;
}

.node-cobrar svg {
    width: 64px;
    height: 52px;
    margin-left: 4px;
    margin-bottom: -3px;
}

.arrow {
    position: absolute;
    height: 10px;
    fill: none;
    stroke: #6f3dc4;
}

.arrow-pagos {
    top: 110px;
    right: 240px;
    width: 76px;
}

.arrow-cobrar {
    top: 64px;
    left: 93px;
    width: calc(100% - 285px);
}

/* Report preview window */
.preview {
    position: absolute;
    top: 5px;
    right: 254px;
    bottom: 6px;
    left: 174px;
    display: flex;
    flex-direction: column;
    padding: 0 4px 0 2px;
    background-color: #f0f0f0;
    box-shadow: 0 0 12px rgba(0, 0, 0, 0.5);
}

.preview-title {
    margin: 0 -4px 0 -2px;
}

.preview-logo {
    width: 16px;
    height: 14px;
    margin-right: 5px;
}

.rbar {
    display: flex;
    align-items: center;
    height: 26px;
    padding-left: 2px;
    border-bottom: 1px solid #ccc;
}

.rbar button {
    display: flex;
    align-items: center;
    justify-content: center;
    width: 21px;
    height: 21px;
    border: 1px solid #aaa;
    background-color: #e1e1e1;
}

.rbar svg {
    width: 16px;
    height: 16px;
    shape-rendering: crispEdges;
}

.rbar .plain {
    width: 16px;
    margin-right: 12px;
    border: none;
    background: none;
}

.rbar .off {
    width: 20px;
    border-color: #ccc;
    background-color: #ccc;
}

.rbar .wide {
    width: 29px;
}

.rbar .wide svg {
    width: 24px;
}

.rbar .mail {
    width: 23px;
    margin-left: 3px;
}

.rbar .gap {
    margin-left: 9px;
}

.rbar .small-gap {
    margin-left: 5px;
}

.rbar input {
    width: 63px;
    height: 22px;
    padding: 0 4px 2px;
    border: 1px solid #3c7f8a;
    font-family: "Noto Sans", sans-serif;
    font-size: 11px;
}

.drop {
    position: relative;
    height: 22px;
    border: 1px solid #3c7f8a;
    background-color: #fff;
}

.drop.zoom {
    width: 101px;
}

.drop.pages {
    width: 50px;
    margin: 0 5px;
}

.drop select {
    width: 100%;
    height: 20px;
    padding-left: 4px;
    appearance: none;
    border: none;
    background: none;
    font-family: "Noto Sans", sans-serif;
    font-size: 11px;
}

.drop::before {
    content: "";
    position: absolute;
    top: 1px;
    right: 1px;
    width: 16px;
    height: 18px;
    border: 1px solid #aaa;
    background-color: #e6e6e6;
    pointer-events: none;
}

.drop::after {
    content: "";
    position: absolute;
    top: 5px;
    right: 6px;
    width: 6px;
    height: 6px;
    border: solid #555;
    border-width: 0 1px 1px 0;
    transform: rotate(45deg);
    pointer-events: none;
}

.viewer {
    flex: 1;
    display: flex;
    min-height: 0;
    margin-top: 4px;
}

.canvas {
    flex: 1;
    min-width: 0;
    overflow: hidden;
    padding: 0 53px 0 57px;
    background-color: #262626;
}

.page {
    height: 100%;
    padding: 0 18px 0 77px;
    border: 1px solid #000;
    background-color: #fff;
    overflow: hidden;
    font-size: 11px;
    line-height: 17px;
}

.plate {
    width: 33%;
    height: 25px;
    margin-left: auto;
    padding: 6px 0 0 5px;
    font-size: 15px;
    font-weight: bold;
    font-style: italic;
    line-height: 18px;
}

.page table {
    width: 100%;
    table-layout: fixed;
    border-collapse: collapse;
}

.heads {
    display: grid;
    grid-template-columns: 2fr 1fr;
    gap: 8px;
    align-items: start;
}

.grid th,
.grid td {
    height: 14px;
    padding: 0 4px;
    border: 1px solid #000;
    font-size: 9px;
    line-height: 12px;
    font-weight: normal;
    text-align: left;
    white-space: nowrap;
}

.grid th,
.grid .g {
    background-color: #c0c0c0;
}

.client th {
    padding: 0 3px;
    text-align: right;
}

.vehicle {
    margin-top: -1px;
}

.vehicle th,
.vehicle td,
.staff th {
    text-align: center;
}

.vehicle td {
    height: 15px;
}

.grid .left {
    text-align: left;
}

.vehicle th:last-child {
    padding-right: 0;
}

.staff .tall td {
    height: 19px;
}

.c-label { width: 79px; }
.c-date { width: 94px; }
.c-end { width: 8px; }
.c-marca { width: 88px; }
.c-modelo { width: 147px; }
.c-anio { width: 38px; }
.c-trans { width: 72px; }
.c-pieza { width: 69px; }

.rule {
    height: 3px;
    margin: 12px 0 6px;
    border: solid #000;
    border-width: 1px 0;
}

.order td.tight {
    padding: 0 1px;
}

.order td.km {
    padding-right: 11px;
    text-align: right;
}

.order th {
    height: 15px;
    padding: 0 2px;
    text-align: right;
}

.order th.status {
    padding-right: 7px;
    font-size: 13px;
    font-weight: bold;
}

.o1 { width: 73px; }
.o2 { width: 63px; }
.o3 { width: 38px; }
.o4 { width: 106px; }
.o5 { width: 72px; }
.o6 { width: 48px; }

.desc-title {
    padding-left: 40px;
    font-size: 9px;
    font-weight: bold;
    line-height: 13px;
    text-align: center;
}

.desc {
    height: 20px;
    padding-left: 4px;
}

.section {
    display: flex;
    justify-content: space-between;
    height: 19px;
    padding: 1px 9px 0 6px;
    border: 1px solid #000;
    font-size: 11px;
    font-style: italic;
}

.section .ubic {
    width: 132px;
}

.labor td,
.parts td {
    height: 17px;
    padding-top: 1px;
    line-height: 16px;
    white-space: nowrap;
}

.labor td:first-child {
    padding-left: 18px;
}

.labor .who:first-child {
    padding-left: 89px;
}

.labor .note td:first-child {
    height: 19px;
    padding-top: 3px;
    padding-left: 37px;
}

.l-asig { width: 103px; }
.l-val { width: 129px; }
.l-est { width: 60px; }

.total {
    display: flex;
    justify-content: flex-end;
    height: 12px;
    margin: 0 34px 8px 0;
    font-size: 9px;
    line-height: 10px;
}

.total b {
    padding: 0 6px 0 4px;
    border: 1px solid #000;
    background-color: #c0c0c0;
}

.total strong {
    width: 51px;
    padding-right: 2px;
    border: 1px solid #000;
    border-left: none;
    font-size: 10px;
    line-height: 12px;
    text-align: right;
    overflow: hidden;
}

.parts {
    margin-bottom: 21px;
}

.parts td:first-child {
    padding-left: 16px;
}

.parts input {
    display: block;
    width: 12px;
    height: 12px;
    margin-bottom: 4px;
    appearance: none;
    border: 1px solid #000;
}

.p-chk { width: 38px; }
.p-qty { width: 28px; }
.p-code { width: 105px; }
.p-ubi { width: 161px; }

/* Scroll bars */
.vscroll {
    display: flex;
    flex-direction: column;
    width: 17px;
    background-color: #e9e9e9;
}

.vscroll button,
.rbar .hscroll button {
    display: flex;
    align-items: center;
    justify-content: center;
    width: 15px;
    height: 16px;
    margin-left: 1px;
    border: 1px solid #aaa;
    background-color: #e1e1e1;
}

.rbar .hscroll button {
    border-color: #ccc;
    background-color: #ccc;
}

.vscroll svg,
.rbar .hscroll svg {
    width: 8px;
    height: 8px;
}

.before { flex: 116; }
.thumb { flex: 318; }
.after { flex: 131; }

.thumb {
    border: solid #777;
    border-width: 0 2px 2px 0;
    background-color: #f0f0f0;
}

.rbar.bottom {
    height: 25px;
    margin: 0 0 2px 5px;
}

.bottom .plain {
    margin-right: 8px;
}

.rbar.bottom .plain {
    margin-right: 7px;
}

.hscroll {
    flex: 1;
    display: flex;
    justify-content: space-between;
    margin-left: 7px;
    padding-right: 1px;
    background-color: #e9e9e9;
}

.hscroll svg {
    fill: #666;
}

/* Status bar */
.statusbar {
    display: flex;
    align-items: center;
    justify-content: flex-end;
    gap: 2px;
    height: 24px;
    border-top: 2px solid #ddd;
    background: linear-gradient(#444, #2a2a2a);
    color: #fff;
    font-size: 11px;
}

.statusbar .copy {
    width: 20px;
    height: 18px;
    background-color: #eee;
    color: #000;
    font-size: 16px;
    line-height: 18px;
    text-align: center;
}

.cell {
    height: 18px;
    padding: 0 3px;
    border: 1px solid #ccc;
    line-height: 16px;
    white-space: nowrap;
}

.cell.user {
    width: 83px;
    padding-left: 5px;
}

.cell.empty {
    width: 34px;
}

.cell.date {
    width: 144px;
}

.resize {
    align-self: flex-end;
    width: 12px;
    height: 12px;
}
```
